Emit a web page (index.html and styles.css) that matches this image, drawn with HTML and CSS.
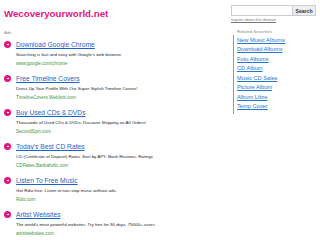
FILE: index.html
```html
<!DOCTYPE html>
<html lang="en">
<head>
    <meta charset="UTF-8">
    <title>Wecoveryourworld.net</title>
    <link rel="stylesheet" href="styles.css">
</head>
<body>
    <div class="page">
        <div class="main">
            <h1 class="site-title">Wecoveryourworld.net</h1>
            <div class="ads-label">Ads</div>
            <ul class="ads">
                <li class="ad">
                    <a class="ad-title" href="#">Download Google Chrome</a>
                    <p class="ad-desc">Searching is fast and easy with Google's web browser.</p>
                    <span class="ad-url">www.google.com/chrome</span>
                </li>
                <li class="ad">
                    <a class="ad-title" href="#">Free Timeline Covers</a>
                    <p class="ad-desc">Dress Up Your Profile With Our Super Stylish Timeline Covers!</p>
                    <span class="ad-url">TimelineCovers.Webfetti.com</span>
                </li>
                <li class="ad">
                    <a class="ad-title" href="#">Buy Used CDs &amp; DVDs</a>
                    <p class="ad-desc">Thousands of Used CDs &amp; DVDs, Discount Shipping on All Orders!</p>
                    <span class="ad-url">SecondSpin.com</span>
                </li>
                <li class="ad">
                    <a class="ad-title" href="#">Today's Best CD Rates</a>
                    <p class="ad-desc">CD (Certificate of Deposit) Rates. Sort by APY, Bank Reviews, Ratings</p>
                    <span class="ad-url">CDRates.Bankaholic.com</span>
                </li>
                <li class="ad">
                    <a class="ad-title" href="#">Listen To Free Music</a>
                    <p class="ad-desc">Get Rdio free. Listen to non-stop music without ads.</p>
                    <span class="ad-url">Rdio.com</span>
                </li>
                <li class="ad">
                    <a class="ad-title" href="#">Artist Websites</a>
                    <p class="ad-desc">The world's most powerful websites. Try free for 90 days. 75000+ users.</p>
                    <span class="ad-url">artistwebsites.com</span>
                </li>
            </ul>
        </div>

        <div class="side">
            <form class="search" onsubmit="return false">
                <input type="text" class="search-input">
                <button class="search-button">Search</button>
            </form>
            <a class="inquire" href="#">Inquire about this domain</a>
            <div class="related-label">Related Searches</div>
            <ul class="related">
                <li><a href="#">New Music Albums</a></li>
                <li><a href="#">Download Albums</a></li>
                <li><a href="#">Foto Albums</a></li>
                <li><a href="#">CD Album</a></li>
                <li><a href="#">Music CD Sales</a></li>
                <li><a href="#">Picture Album</a></li>
                <li><a href="#">Album Libre</a></li>
                <li><a href="#">Temp Cover</a></li>
            </ul>
        </div>
    </div>
</body>
</html>
```

FILE: styles.css
```css
:root {
    --pink: #e0177f;
    --blue: #1f5fc8;
    --link: #2673cc;
    --green: #3a9a3a;
    --gray: #888;
}

* {
    margin: 0;
    padding: 0;
    box-sizing: border-box;
    font-family: "Liberation Sans", Arial, sans-serif;
}

body {
    background: #fff;
    color: #222;
}

.page {
    display: flex;
    gap: 12px;
    padding: 4px 4px 0 4px;
}

.main {
    flex: 1;
}

.site-title {
    font-size: 9.7px;
    line-height: 19px;
    font-weight: bold;
    color: var(--pink);
    margin-bottom: 6px;
}

.ads-label {
    font-size: 4.4px;
    line-height: 7px;
    color: var(--gray);
    margin-bottom: 4px;
}

.ads {
    list-style: none;
}

.ad {
    position: relative;
    padding-left: 12px;
    height: 34px;
}

.ad::before {
    content: "";
    position: absolute;
    left: 0;
    top: 1px;
    width: 7px;
    height: 7px;
    border-radius: 50%;
    background: var(--pink);
}

.ad::after {
    content: "";
    position: absolute;
    left: 2.5px;
    top: 4px;
    width: 2px;
    height: 1px;
    background: #fff;
}

.ad-title {
    display: block;
    font-size: 6.7px;
    line-height: 10px;
    color: var(--blue);
    text-decoration: underline;
}

.ad-desc {
    font-size: 4.4px;
    line-height: 9px;
    color: #222;
}

.ad-url {
    display: block;
    font-size: 4.6px;
    line-height: 9px;
    color: var(--green);
}

.side {
    width: 85px;
    margin-top: 1px;
}

.search {
    display: flex;
    height: 11px;
}

.search-input {
    width: 62px;
    height: 11px;
    border: 1px solid #ccc;
    outline: none;
}

.search-button {
    flex: 1;
    height: 11px;
    border: 1px solid #ccc;
    border-left: none;
    background: #eee;
    font-size: 5.1px;
    font-weight: bold;
    color: #333;
}

.inquire {
    display: block;
    font-size: 4px;
    line-height: 8px;
    color: #777;
    text-decoration: underline;
    margin-bottom: 4px;
}

.related-label {
    font-size: 4.4px;
    line-height: 7px;
    color: var(--gray);
    padding-left: 6px;
}

.related {
    list-style: none;
    border-left: 1px solid #999;
    margin-left: 2px;
    padding: 1px 0 2px 3px;
}

.related li {
    font-size: 5.7px;
    line-height: 9.45px;
}

.related a {
    color: var(--link);
    text-decoration: underline;
}
```
